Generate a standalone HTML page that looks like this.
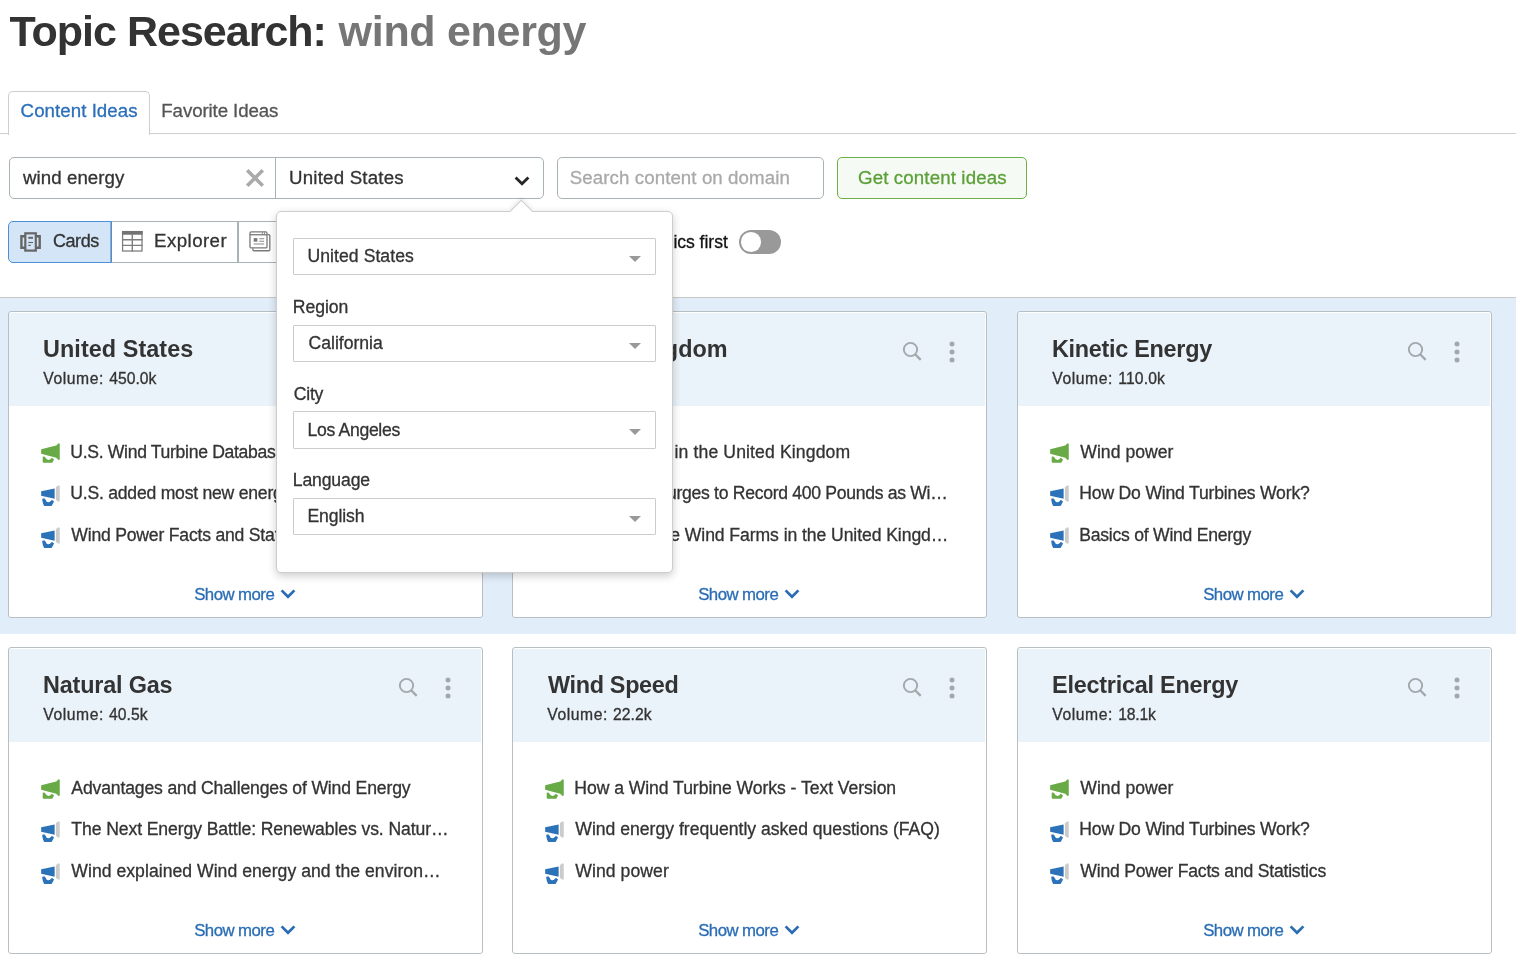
<!DOCTYPE html>
<html lang="en">
<head>
<meta charset="utf-8">
<title>Topic Research: wind energy</title>
<style>
*{box-sizing:border-box}
html,body{margin:0;padding:0;background:#fff}
body{font-family:"Liberation Sans",sans-serif;color:#333;width:1516px;height:976px;overflow:hidden;position:relative}
.page{position:absolute;left:0;top:0;width:1516px;height:976px;will-change:transform}
.t{position:absolute;display:block;margin:0;padding:0;line-height:1;white-space:nowrap;font-weight:400;-webkit-text-stroke:0.3px}
svg{display:block;position:absolute;overflow:visible}
.ic{position:absolute;display:block}
h1,h2{margin:0;font-weight:700}
.tt,.ctitle{-webkit-text-stroke:0}
.ptitle .t{font-weight:700;color:#333}
.ptitle .tkw{color:#767676}
.tabs{position:absolute;left:0;top:91px;width:1516px;height:43px;border-bottom:1px solid #cfcfcf}
.tab{position:absolute;top:0;height:43px;display:block}
.tab.on{left:8px;width:142px;border:1px solid #cfcfcf;border-bottom:0;border-radius:5px 5px 0 0;background:#fff;height:44px}
.tab.on .t{color:#2b6fba}
.tab.off{left:150px;width:140px}
.tab.off .t{color:#555}
.srow{position:absolute;left:0;top:157px;width:1516px;height:42px;margin:0}
.grp{position:absolute;left:9px;top:0;width:535px;height:42px;border:1px solid #a8b3b6;border-radius:5px;background:#fff}
.kw{position:absolute;left:0;top:0;width:266px;height:40px;border-right:1px solid #a8b3b6}
.ctry{position:absolute;left:266px;top:0;width:267px;height:40px}
.xic{left:234.5px;top:9.9px}
.cvd{left:238.3px;top:18px}
.dom{position:absolute;left:557px;top:0;width:267px;height:42px;border:1px solid #a8b3b6;border-radius:5px;background:#fff}
.inp{color:#333}
.inp.ph{color:#a9a9a9}
.go{position:absolute;left:837px;top:0;width:190px;height:42px;border:1px solid #6db04a;border-radius:5px;background:#f6faf4;padding:0;margin:0;font:inherit}
.gob{color:#5ca038}
.vrow{position:absolute;left:0;top:221px;width:1516px;height:42px}
.vbtns{position:absolute;left:8px;top:0;height:42px;width:600px}
.vb{position:absolute;top:0;height:42px;display:block;border:1px solid #a8b3b6;background:#fff}
.vb.on{background:#d3e5f6;border-color:#4a90d9;border-radius:5px 0 0 5px;z-index:2;box-shadow:inset -1px 0 0 #93a9bf}
.vbt{color:#333}
.trend .t{color:#111}
.tog{position:absolute;left:739px;top:8.8px;width:42px;height:24.4px;border-radius:13px;background:#999;display:block}
.tog b{position:absolute;left:2px;top:2.4px;width:19.6px;height:19.6px;border-radius:50%;background:#fff;display:block}
.band{position:absolute;left:0;top:297px;width:1516px;height:337px;background:#e1edf9;border-top:1px solid #c8c8c8}
.card{position:absolute;width:475px;height:307px;border:1px solid #b7bfc2;border-radius:3px;background:#fff;margin:0}
.chead{position:absolute;left:0;top:1px;width:472px;height:93px;background:#eaf2fa;display:block}
.ctitle{font-weight:700;color:#333}
.cvol{color:#333}
.clist{list-style:none;margin:0;padding:0}
.clist li{display:block}
.citem{color:#333}
.cmore{color:#2a6db5}
.mg{left:0;top:0}
.popup{position:absolute;width:397px;height:362px;background:#fff;border:1px solid #cdcdcd;border-radius:5px;box-shadow:0 3px 9px rgba(0,0,0,.2);z-index:10}
.parrow{position:absolute;left:236px;top:-9px;width:16.6px;height:16.6px;background:#fff;border-left:1px solid #cdcdcd;border-top:1px solid #cdcdcd;transform:rotate(45deg);display:block;box-shadow:-2px -2px 4px rgba(0,0,0,.07)}
.psel{position:absolute;left:16px;width:363px;height:37px;border:1px solid #ccc;border-radius:1px;background:#fff}
.pval{color:#333}
.plabel{color:#333}
.caret{position:absolute;right:14.1px;top:17px;width:0;height:0;border-left:6.5px solid transparent;border-right:6.5px solid transparent;border-top:6.3px solid #999;display:block}
</style>
</head>
<body>
<div class="page">

<h1 class="ptitle"><span class="t tt" style="left:9.50px;top:10.00px;font-size:43px;letter-spacing:-0.996px;">Topic Research:</span><span class="t tt tkw" style="left:338.60px;top:10.00px;font-size:43px;letter-spacing:-0.297px;">wind energy</span></h1>
<nav class="tabs">
<a class="tab on"><span class="t tabt" style="left:11.60px;top:10.00px;font-size:18.7px;letter-spacing:0.049px;">Content Ideas</span></a>
<a class="tab off"><span class="t tabt" style="left:11.30px;top:11.00px;font-size:18.7px;letter-spacing:-0.105px;">Favorite Ideas</span></a>
</nav>
<form class="srow">
<div class="grp">
<div class="kw"><span class="t inp" style="left:12.90px;top:11.00px;font-size:18.7px;letter-spacing:0.078px;">wind energy</span><svg viewBox="0 0 20 20" width="20" height="20" class="xic"><path d="M2.2 2.2 L17.8 17.8 M17.8 2.2 L2.2 17.8" stroke="#aaa" stroke-width="3.6" fill="none"/></svg></div>
<div class="ctry"><span class="t inp" style="left:13.00px;top:11.00px;font-size:18.7px;letter-spacing:0.205px;">United States</span><svg viewBox="0 0 16 10" width="16" height="10" class="cvd"><path d="M1.6 1.5 L8 7.7 L14.4 1.5" fill="none" stroke="#262626" stroke-width="2.8"/></svg></div>
</div>
<div class="dom"><span class="t inp ph" style="left:11.80px;top:11.00px;font-size:18.7px;letter-spacing:0.080px;">Search content on domain</span></div>
<button class="go" type="button"><span class="t gob" style="left:20.00px;top:11.00px;font-size:18.7px;letter-spacing:0.129px;">Get content ideas</span></button>
</form>
<div class="vrow">
<div class="vbtns">
<a class="vb on" style="left:0;width:104px"><svg viewBox="0 0 24 22" width="24" height="22" class="vic" style="left:10px;top:9px"><g fill="none" stroke="#666" stroke-width="2.2"><rect x="6.3" y="2.3" width="10.5" height="17.3"/><path d="M6.2 5.2 H2.4 V16.7 H6.2 M16.9 5.2 H20.7 V16.7 H16.9" stroke-width="2.4"/></g><g stroke="#666" fill="none"><path d="M9.3 6.8 H14" stroke-width="2"/><path d="M9.3 11.5 H14" stroke-width="1.2"/><path d="M9.3 14.4 H11.8" stroke-width="1.2"/></g></svg><span class="t vbt" style="left:43.90px;top:10.00px;font-size:18px;letter-spacing:-0.404px;">Cards</span></a>
<a class="vb" style="left:103px;width:127px"><svg viewBox="0 0 21 21" width="20.6" height="20.6" class="vic" style="left:10.2px;top:9.1px"><rect x="0.6" y="0.6" width="19.8" height="19.8" fill="none" stroke="#7d7d7d" stroke-width="1.3"/><rect x="0" y="0" width="21" height="3.8" fill="#737373"/><path d="M0 8.9 H21 M0 14.6 H21 M10.5 3 V21" stroke="#7d7d7d" stroke-width="1.4" fill="none"/></svg><span class="t vbt" style="left:42.10px;top:10.00px;font-size:18.7px;letter-spacing:0.420px;">Explorer</span></a>
<a class="vb" style="left:230px;width:128px"><svg viewBox="0 0 23 22" width="23" height="22" class="vic" style="left:10.1px;top:9.1px;width:21.8px;height:20.6px"><g fill="none" stroke="#7a7a7a" stroke-width="1.4"><path d="M4 18.4 V19.9 Q4 21.1 5.2 21.1 H20.9 Q22.1 21.1 22.1 19.9 V5 Q22.1 3.8 20.9 3.8 H19.6"/><rect x="0.9" y="0.9" width="18.2" height="17.2" rx="1.4"/><path d="M0.9 4 H19.1" /></g><rect x="4.9" y="7.6" width="3.9" height="3.8" fill="#777"/><path d="M10.8 8.2 H16 M10.8 11 H16 M4.9 13.8 H16" stroke="#888" stroke-width="1.1"/><path d="M14.2 1.4 V3.4 M16.4 1.4 V3.4" stroke="#7a7a7a" stroke-width="0.9"/></svg><span class="t vbt" style="left:43.00px;top:10.00px;font-size:18.7px;letter-spacing:-0.060px;">Overview</span></a>
</div>
<label class="trend"><span class="t trt" style="left:547.55px;top:13.00px;font-size:17.6px;letter-spacing:-0.043px;">Trending subtopics first</span><i class="tog"><b></b></i></label>
</div>

<div class="band"></div>
<section class="card" style="left:8px;top:311px">
<header class="chead">
<h2 class="t ctitle" style="left:34.00px;top:25.00px;font-size:23.4px;letter-spacing:0.070px;">United States</h2>
<span class="t cvol" style="left:34.30px;top:58.00px;font-size:15.7px;letter-spacing:0.563px;">Volume:</span>
<span class="t cvol" style="left:100.20px;top:58.00px;font-size:15.7px;letter-spacing:0.029px;">450.0k</span>
<span class="ic" style="left:388.6px;top:28px"><svg class="sr" viewBox="0 0 22 22" width="22" height="22"><circle cx="8.5" cy="8.5" r="6.65" fill="none" stroke="#a3a9ab" stroke-width="1.9"/><path d="M13.1 13.2 L18.7 18.9" stroke="#a3a9ab" stroke-width="2.3" fill="none"/></svg></span>
<span class="ic" style="left:436.3px;top:27.6px"><svg class="dt" viewBox="0 0 6 22" width="6" height="22"><circle cx="3" cy="3" r="2.5" fill="#a3a9ab"/><circle cx="3" cy="11" r="2.5" fill="#a3a9ab"/><circle cx="3" cy="19" r="2.5" fill="#a3a9ab"/></svg></span>
</header>
<ul class="clist">
<li>
<span class="ic" style="left:32px;top:131px"><svg class="mg" viewBox="0 0 20 22" width="20" height="22"><path fill="#68aa46" d="M0.15 6.2 L15.2 2.4 L17.3 0.5 Q17.8 0.1 18.3 0.6 L18.75 1.15 L18.75 16.2 L18.3 16.7 Q17.8 17.2 17.3 16.7 L15.2 14.7 L0.15 10.8 Z"/><path fill="#68aa46" d="M1.7 14.3 Q1.7 13.5 2.5 13.6 L3.5 13.7 Q4.1 13.8 4.4 14.6 Q5.4 17 7.4 17 Q9.2 17 10.2 15.3 Q10.5 14.8 11 15 L12.6 15.9 Q13.1 16.2 12.9 16.7 L11.6 19.2 Q11.3 19.75 10.7 19.75 L2.8 19.75 Q1.7 19.75 1.7 18.7 Z"/></svg></span>
<span class="t citem" style="left:61.30px;top:132.00px;font-size:17.6px;letter-spacing:-0.321px;">U.S. Wind Turbine Database</span>
</li>
<li>
<span class="ic" style="left:32px;top:173px"><svg class="mg" viewBox="0 0 20 22" width="20" height="22"><path fill="#2c72b8" d="M0.15 6.2 L13.65 3.45 L13.65 13.8 L0.15 10.8 Z"/><path fill="#2c72b8" d="M1.2 14.4 Q1.1 13.4 2.1 13.4 L3.3 13.5 Q4.1 13.6 4.4 14.5 Q5.4 17.2 7.4 17.2 Q9.2 17.2 10.2 15.4 Q10.5 14.9 11 15.1 L12.6 16 Q13.1 16.3 12.8 16.9 L10.9 20.5 Q10.6 21 10 21 L3.9 21 Q3.2 21 2.9 20.4 Q1.5 17.6 1.2 14.4 Z"/><path fill="#cbcbcb" d="M14.9 2.3 L17.1 0.5 Q17.6 0.1 18.1 0.6 L18.75 1.3 L18.75 15.9 L18.1 16.5 Q17.6 17 17.1 16.6 L14.9 14.7 Z"/></svg></span>
<span class="t citem" style="left:61.30px;top:173.00px;font-size:17.6px;letter-spacing:-0.233px;">U.S. added most new energy capacity from win…</span>
</li>
<li>
<span class="ic" style="left:32px;top:215px"><svg class="mg" viewBox="0 0 20 22" width="20" height="22"><path fill="#2c72b8" d="M0.15 6.2 L13.65 3.45 L13.65 13.8 L0.15 10.8 Z"/><path fill="#2c72b8" d="M1.2 14.4 Q1.1 13.4 2.1 13.4 L3.3 13.5 Q4.1 13.6 4.4 14.5 Q5.4 17.2 7.4 17.2 Q9.2 17.2 10.2 15.4 Q10.5 14.9 11 15.1 L12.6 16 Q13.1 16.3 12.8 16.9 L10.9 20.5 Q10.6 21 10 21 L3.9 21 Q3.2 21 2.9 20.4 Q1.5 17.6 1.2 14.4 Z"/><path fill="#cbcbcb" d="M14.9 2.3 L17.1 0.5 Q17.6 0.1 18.1 0.6 L18.75 1.3 L18.75 15.9 L18.1 16.5 Q17.6 17 17.1 16.6 L14.9 14.7 Z"/></svg></span>
<span class="t citem" style="left:62.30px;top:215.00px;font-size:17.6px;letter-spacing:-0.206px;">Wind Power Facts and Statistics</span>
</li>
</ul>
<a class="more">
<span class="t cmore" style="left:185.20px;top:275.00px;font-size:16.8px;letter-spacing:-0.543px;">Show more</span>
<span class="ic" style="left:271.2px;top:277.2px"><svg class="cv" viewBox="0 0 16 10" width="16" height="10"><path d="M1.6 1.4 L8 7.8 L14.4 1.4" fill="none" stroke="#2a6db5" stroke-width="2.7"/></svg></span>
</a>
</section>
<section class="card" style="left:512px;top:311px">
<header class="chead">
<h2 class="t ctitle" style="left:34.00px;top:25.00px;font-size:23.4px;letter-spacing:-0.008px;">United Kingdom</h2>
<span class="t cvol" style="left:34.30px;top:58.00px;font-size:15.7px;letter-spacing:0.563px;">Volume:</span>
<span class="t cvol" style="left:100.20px;top:58.00px;font-size:15.7px;letter-spacing:-0.091px;">135.0k</span>
<span class="ic" style="left:388.6px;top:28px"><svg class="sr" viewBox="0 0 22 22" width="22" height="22"><circle cx="8.5" cy="8.5" r="6.65" fill="none" stroke="#a3a9ab" stroke-width="1.9"/><path d="M13.1 13.2 L18.7 18.9" stroke="#a3a9ab" stroke-width="2.3" fill="none"/></svg></span>
<span class="ic" style="left:436.3px;top:27.6px"><svg class="dt" viewBox="0 0 6 22" width="6" height="22"><circle cx="3" cy="3" r="2.5" fill="#a3a9ab"/><circle cx="3" cy="11" r="2.5" fill="#a3a9ab"/><circle cx="3" cy="19" r="2.5" fill="#a3a9ab"/></svg></span>
</header>
<ul class="clist">
<li>
<span class="ic" style="left:32px;top:131px"><svg class="mg" viewBox="0 0 20 22" width="20" height="22"><path fill="#68aa46" d="M0.15 6.2 L15.2 2.4 L17.3 0.5 Q17.8 0.1 18.3 0.6 L18.75 1.15 L18.75 16.2 L18.3 16.7 Q17.8 17.2 17.3 16.7 L15.2 14.7 L0.15 10.8 Z"/><path fill="#68aa46" d="M1.7 14.3 Q1.7 13.5 2.5 13.6 L3.5 13.7 Q4.1 13.8 4.4 14.6 Q5.4 17 7.4 17 Q9.2 17 10.2 15.3 Q10.5 14.8 11 15 L12.6 15.9 Q13.1 16.2 12.9 16.7 L11.6 19.2 Q11.3 19.75 10.7 19.75 L2.8 19.75 Q1.7 19.75 1.7 18.7 Z"/></svg></span>
<span class="t citem" style="left:62.32px;top:132.00px;font-size:17.6px;letter-spacing:0.127px;">Wind power in the United Kingdom</span>
</li>
<li>
<span class="ic" style="left:32px;top:173px"><svg class="mg" viewBox="0 0 20 22" width="20" height="22"><path fill="#2c72b8" d="M0.15 6.2 L13.65 3.45 L13.65 13.8 L0.15 10.8 Z"/><path fill="#2c72b8" d="M1.2 14.4 Q1.1 13.4 2.1 13.4 L3.3 13.5 Q4.1 13.6 4.4 14.5 Q5.4 17.2 7.4 17.2 Q9.2 17.2 10.2 15.4 Q10.5 14.9 11 15.1 L12.6 16 Q13.1 16.3 12.8 16.9 L10.9 20.5 Q10.6 21 10 21 L3.9 21 Q3.2 21 2.9 20.4 Q1.5 17.6 1.2 14.4 Z"/><path fill="#cbcbcb" d="M14.9 2.3 L17.1 0.5 Q17.6 0.1 18.1 0.6 L18.75 1.3 L18.75 15.9 L18.1 16.5 Q17.6 17 17.1 16.6 L14.9 14.7 Z"/></svg></span>
<span class="t citem" style="left:52.05px;top:173.00px;font-size:17.6px;letter-spacing:-0.302px;">U.K. Power Surges to Record 400 Pounds as Wi…</span>
</li>
<li>
<span class="ic" style="left:32px;top:215px"><svg class="mg" viewBox="0 0 20 22" width="20" height="22"><path fill="#2c72b8" d="M0.15 6.2 L13.65 3.45 L13.65 13.8 L0.15 10.8 Z"/><path fill="#2c72b8" d="M1.2 14.4 Q1.1 13.4 2.1 13.4 L3.3 13.5 Q4.1 13.6 4.4 14.5 Q5.4 17.2 7.4 17.2 Q9.2 17.2 10.2 15.4 Q10.5 14.9 11 15.1 L12.6 16 Q13.1 16.3 12.8 16.9 L10.9 20.5 Q10.6 21 10 21 L3.9 21 Q3.2 21 2.9 20.4 Q1.5 17.6 1.2 14.4 Z"/><path fill="#cbcbcb" d="M14.9 2.3 L17.1 0.5 Q17.6 0.1 18.1 0.6 L18.75 1.3 L18.75 15.9 L18.1 16.5 Q17.6 17 17.1 16.6 L14.9 14.7 Z"/></svg></span>
<span class="t citem" style="left:49.28px;top:215.00px;font-size:17.6px;letter-spacing:-0.079px;">List of Offshore Wind Farms in the United Kingd…</span>
</li>
</ul>
<a class="more">
<span class="t cmore" style="left:185.20px;top:275.00px;font-size:16.8px;letter-spacing:-0.543px;">Show more</span>
<span class="ic" style="left:271.2px;top:277.2px"><svg class="cv" viewBox="0 0 16 10" width="16" height="10"><path d="M1.6 1.4 L8 7.8 L14.4 1.4" fill="none" stroke="#2a6db5" stroke-width="2.7"/></svg></span>
</a>
</section>
<section class="card" style="left:1017px;top:311px">
<header class="chead">
<h2 class="t ctitle" style="left:34.00px;top:25.00px;font-size:23.4px;letter-spacing:-0.275px;">Kinetic Energy</h2>
<span class="t cvol" style="left:34.30px;top:58.00px;font-size:15.7px;letter-spacing:0.563px;">Volume:</span>
<span class="t cvol" style="left:100.20px;top:58.00px;font-size:15.7px;letter-spacing:0.162px;">110.0k</span>
<span class="ic" style="left:388.6px;top:28px"><svg class="sr" viewBox="0 0 22 22" width="22" height="22"><circle cx="8.5" cy="8.5" r="6.65" fill="none" stroke="#a3a9ab" stroke-width="1.9"/><path d="M13.1 13.2 L18.7 18.9" stroke="#a3a9ab" stroke-width="2.3" fill="none"/></svg></span>
<span class="ic" style="left:436.3px;top:27.6px"><svg class="dt" viewBox="0 0 6 22" width="6" height="22"><circle cx="3" cy="3" r="2.5" fill="#a3a9ab"/><circle cx="3" cy="11" r="2.5" fill="#a3a9ab"/><circle cx="3" cy="19" r="2.5" fill="#a3a9ab"/></svg></span>
</header>
<ul class="clist">
<li>
<span class="ic" style="left:32px;top:131px"><svg class="mg" viewBox="0 0 20 22" width="20" height="22"><path fill="#68aa46" d="M0.15 6.2 L15.2 2.4 L17.3 0.5 Q17.8 0.1 18.3 0.6 L18.75 1.15 L18.75 16.2 L18.3 16.7 Q17.8 17.2 17.3 16.7 L15.2 14.7 L0.15 10.8 Z"/><path fill="#68aa46" d="M1.7 14.3 Q1.7 13.5 2.5 13.6 L3.5 13.7 Q4.1 13.8 4.4 14.6 Q5.4 17 7.4 17 Q9.2 17 10.2 15.3 Q10.5 14.8 11 15 L12.6 15.9 Q13.1 16.2 12.9 16.7 L11.6 19.2 Q11.3 19.75 10.7 19.75 L2.8 19.75 Q1.7 19.75 1.7 18.7 Z"/></svg></span>
<span class="t citem" style="left:62.30px;top:132.00px;font-size:17.6px;letter-spacing:0.030px;">Wind power</span>
</li>
<li>
<span class="ic" style="left:32px;top:173px"><svg class="mg" viewBox="0 0 20 22" width="20" height="22"><path fill="#2c72b8" d="M0.15 6.2 L13.65 3.45 L13.65 13.8 L0.15 10.8 Z"/><path fill="#2c72b8" d="M1.2 14.4 Q1.1 13.4 2.1 13.4 L3.3 13.5 Q4.1 13.6 4.4 14.5 Q5.4 17.2 7.4 17.2 Q9.2 17.2 10.2 15.4 Q10.5 14.9 11 15.1 L12.6 16 Q13.1 16.3 12.8 16.9 L10.9 20.5 Q10.6 21 10 21 L3.9 21 Q3.2 21 2.9 20.4 Q1.5 17.6 1.2 14.4 Z"/><path fill="#cbcbcb" d="M14.9 2.3 L17.1 0.5 Q17.6 0.1 18.1 0.6 L18.75 1.3 L18.75 15.9 L18.1 16.5 Q17.6 17 17.1 16.6 L14.9 14.7 Z"/></svg></span>
<span class="t citem" style="left:61.30px;top:173.00px;font-size:17.6px;letter-spacing:-0.194px;">How Do Wind Turbines Work?</span>
</li>
<li>
<span class="ic" style="left:32px;top:215px"><svg class="mg" viewBox="0 0 20 22" width="20" height="22"><path fill="#2c72b8" d="M0.15 6.2 L13.65 3.45 L13.65 13.8 L0.15 10.8 Z"/><path fill="#2c72b8" d="M1.2 14.4 Q1.1 13.4 2.1 13.4 L3.3 13.5 Q4.1 13.6 4.4 14.5 Q5.4 17.2 7.4 17.2 Q9.2 17.2 10.2 15.4 Q10.5 14.9 11 15.1 L12.6 16 Q13.1 16.3 12.8 16.9 L10.9 20.5 Q10.6 21 10 21 L3.9 21 Q3.2 21 2.9 20.4 Q1.5 17.6 1.2 14.4 Z"/><path fill="#cbcbcb" d="M14.9 2.3 L17.1 0.5 Q17.6 0.1 18.1 0.6 L18.75 1.3 L18.75 15.9 L18.1 16.5 Q17.6 17 17.1 16.6 L14.9 14.7 Z"/></svg></span>
<span class="t citem" style="left:61.30px;top:215.00px;font-size:17.6px;letter-spacing:-0.254px;">Basics of Wind Energy</span>
</li>
</ul>
<a class="more">
<span class="t cmore" style="left:185.20px;top:275.00px;font-size:16.8px;letter-spacing:-0.543px;">Show more</span>
<span class="ic" style="left:271.2px;top:277.2px"><svg class="cv" viewBox="0 0 16 10" width="16" height="10"><path d="M1.6 1.4 L8 7.8 L14.4 1.4" fill="none" stroke="#2a6db5" stroke-width="2.7"/></svg></span>
</a>
</section>
<section class="card" style="left:8px;top:647px">
<header class="chead">
<h2 class="t ctitle" style="left:34.00px;top:25.00px;font-size:23.4px;letter-spacing:-0.179px;">Natural Gas</h2>
<span class="t cvol" style="left:34.30px;top:58.00px;font-size:15.7px;letter-spacing:0.563px;">Volume:</span>
<span class="t cvol" style="left:100.00px;top:58.00px;font-size:15.7px;letter-spacing:0.067px;">40.5k</span>
<span class="ic" style="left:388.6px;top:28px"><svg class="sr" viewBox="0 0 22 22" width="22" height="22"><circle cx="8.5" cy="8.5" r="6.65" fill="none" stroke="#a3a9ab" stroke-width="1.9"/><path d="M13.1 13.2 L18.7 18.9" stroke="#a3a9ab" stroke-width="2.3" fill="none"/></svg></span>
<span class="ic" style="left:436.3px;top:27.6px"><svg class="dt" viewBox="0 0 6 22" width="6" height="22"><circle cx="3" cy="3" r="2.5" fill="#a3a9ab"/><circle cx="3" cy="11" r="2.5" fill="#a3a9ab"/><circle cx="3" cy="19" r="2.5" fill="#a3a9ab"/></svg></span>
</header>
<ul class="clist">
<li>
<span class="ic" style="left:32px;top:131px"><svg class="mg" viewBox="0 0 20 22" width="20" height="22"><path fill="#68aa46" d="M0.15 6.2 L15.2 2.4 L17.3 0.5 Q17.8 0.1 18.3 0.6 L18.75 1.15 L18.75 16.2 L18.3 16.7 Q17.8 17.2 17.3 16.7 L15.2 14.7 L0.15 10.8 Z"/><path fill="#68aa46" d="M1.7 14.3 Q1.7 13.5 2.5 13.6 L3.5 13.7 Q4.1 13.8 4.4 14.6 Q5.4 17 7.4 17 Q9.2 17 10.2 15.3 Q10.5 14.8 11 15 L12.6 15.9 Q13.1 16.2 12.9 16.7 L11.6 19.2 Q11.3 19.75 10.7 19.75 L2.8 19.75 Q1.7 19.75 1.7 18.7 Z"/></svg></span>
<span class="t citem" style="left:62.30px;top:132.00px;font-size:17.6px;letter-spacing:-0.153px;">Advantages and Challenges of Wind Energy</span>
</li>
<li>
<span class="ic" style="left:32px;top:173px"><svg class="mg" viewBox="0 0 20 22" width="20" height="22"><path fill="#2c72b8" d="M0.15 6.2 L13.65 3.45 L13.65 13.8 L0.15 10.8 Z"/><path fill="#2c72b8" d="M1.2 14.4 Q1.1 13.4 2.1 13.4 L3.3 13.5 Q4.1 13.6 4.4 14.5 Q5.4 17.2 7.4 17.2 Q9.2 17.2 10.2 15.4 Q10.5 14.9 11 15.1 L12.6 16 Q13.1 16.3 12.8 16.9 L10.9 20.5 Q10.6 21 10 21 L3.9 21 Q3.2 21 2.9 20.4 Q1.5 17.6 1.2 14.4 Z"/><path fill="#cbcbcb" d="M14.9 2.3 L17.1 0.5 Q17.6 0.1 18.1 0.6 L18.75 1.3 L18.75 15.9 L18.1 16.5 Q17.6 17 17.1 16.6 L14.9 14.7 Z"/></svg></span>
<span class="t citem" style="left:62.30px;top:173.00px;font-size:17.6px;letter-spacing:-0.093px;">The Next Energy Battle: Renewables vs. Natur…</span>
</li>
<li>
<span class="ic" style="left:32px;top:215px"><svg class="mg" viewBox="0 0 20 22" width="20" height="22"><path fill="#2c72b8" d="M0.15 6.2 L13.65 3.45 L13.65 13.8 L0.15 10.8 Z"/><path fill="#2c72b8" d="M1.2 14.4 Q1.1 13.4 2.1 13.4 L3.3 13.5 Q4.1 13.6 4.4 14.5 Q5.4 17.2 7.4 17.2 Q9.2 17.2 10.2 15.4 Q10.5 14.9 11 15.1 L12.6 16 Q13.1 16.3 12.8 16.9 L10.9 20.5 Q10.6 21 10 21 L3.9 21 Q3.2 21 2.9 20.4 Q1.5 17.6 1.2 14.4 Z"/><path fill="#cbcbcb" d="M14.9 2.3 L17.1 0.5 Q17.6 0.1 18.1 0.6 L18.75 1.3 L18.75 15.9 L18.1 16.5 Q17.6 17 17.1 16.6 L14.9 14.7 Z"/></svg></span>
<span class="t citem" style="left:62.30px;top:215.00px;font-size:17.6px;letter-spacing:0.037px;">Wind explained Wind energy and the environ…</span>
</li>
</ul>
<a class="more">
<span class="t cmore" style="left:185.20px;top:275.00px;font-size:16.8px;letter-spacing:-0.543px;">Show more</span>
<span class="ic" style="left:271.2px;top:277.2px"><svg class="cv" viewBox="0 0 16 10" width="16" height="10"><path d="M1.6 1.4 L8 7.8 L14.4 1.4" fill="none" stroke="#2a6db5" stroke-width="2.7"/></svg></span>
</a>
</section>
<section class="card" style="left:512px;top:647px">
<header class="chead">
<h2 class="t ctitle" style="left:35.00px;top:25.00px;font-size:23.4px;letter-spacing:-0.317px;">Wind Speed</h2>
<span class="t cvol" style="left:34.30px;top:58.00px;font-size:15.7px;letter-spacing:0.563px;">Volume:</span>
<span class="t cvol" style="left:100.10px;top:58.00px;font-size:15.7px;letter-spacing:0.017px;">22.2k</span>
<span class="ic" style="left:388.6px;top:28px"><svg class="sr" viewBox="0 0 22 22" width="22" height="22"><circle cx="8.5" cy="8.5" r="6.65" fill="none" stroke="#a3a9ab" stroke-width="1.9"/><path d="M13.1 13.2 L18.7 18.9" stroke="#a3a9ab" stroke-width="2.3" fill="none"/></svg></span>
<span class="ic" style="left:436.3px;top:27.6px"><svg class="dt" viewBox="0 0 6 22" width="6" height="22"><circle cx="3" cy="3" r="2.5" fill="#a3a9ab"/><circle cx="3" cy="11" r="2.5" fill="#a3a9ab"/><circle cx="3" cy="19" r="2.5" fill="#a3a9ab"/></svg></span>
</header>
<ul class="clist">
<li>
<span class="ic" style="left:32px;top:131px"><svg class="mg" viewBox="0 0 20 22" width="20" height="22"><path fill="#68aa46" d="M0.15 6.2 L15.2 2.4 L17.3 0.5 Q17.8 0.1 18.3 0.6 L18.75 1.15 L18.75 16.2 L18.3 16.7 Q17.8 17.2 17.3 16.7 L15.2 14.7 L0.15 10.8 Z"/><path fill="#68aa46" d="M1.7 14.3 Q1.7 13.5 2.5 13.6 L3.5 13.7 Q4.1 13.8 4.4 14.6 Q5.4 17 7.4 17 Q9.2 17 10.2 15.3 Q10.5 14.8 11 15 L12.6 15.9 Q13.1 16.2 12.9 16.7 L11.6 19.2 Q11.3 19.75 10.7 19.75 L2.8 19.75 Q1.7 19.75 1.7 18.7 Z"/></svg></span>
<span class="t citem" style="left:61.30px;top:132.00px;font-size:17.6px;letter-spacing:-0.056px;">How a Wind Turbine Works - Text Version</span>
</li>
<li>
<span class="ic" style="left:32px;top:173px"><svg class="mg" viewBox="0 0 20 22" width="20" height="22"><path fill="#2c72b8" d="M0.15 6.2 L13.65 3.45 L13.65 13.8 L0.15 10.8 Z"/><path fill="#2c72b8" d="M1.2 14.4 Q1.1 13.4 2.1 13.4 L3.3 13.5 Q4.1 13.6 4.4 14.5 Q5.4 17.2 7.4 17.2 Q9.2 17.2 10.2 15.4 Q10.5 14.9 11 15.1 L12.6 16 Q13.1 16.3 12.8 16.9 L10.9 20.5 Q10.6 21 10 21 L3.9 21 Q3.2 21 2.9 20.4 Q1.5 17.6 1.2 14.4 Z"/><path fill="#cbcbcb" d="M14.9 2.3 L17.1 0.5 Q17.6 0.1 18.1 0.6 L18.75 1.3 L18.75 15.9 L18.1 16.5 Q17.6 17 17.1 16.6 L14.9 14.7 Z"/></svg></span>
<span class="t citem" style="left:62.30px;top:173.00px;font-size:17.6px;letter-spacing:-0.005px;">Wind energy frequently asked questions (FAQ)</span>
</li>
<li>
<span class="ic" style="left:32px;top:215px"><svg class="mg" viewBox="0 0 20 22" width="20" height="22"><path fill="#2c72b8" d="M0.15 6.2 L13.65 3.45 L13.65 13.8 L0.15 10.8 Z"/><path fill="#2c72b8" d="M1.2 14.4 Q1.1 13.4 2.1 13.4 L3.3 13.5 Q4.1 13.6 4.4 14.5 Q5.4 17.2 7.4 17.2 Q9.2 17.2 10.2 15.4 Q10.5 14.9 11 15.1 L12.6 16 Q13.1 16.3 12.8 16.9 L10.9 20.5 Q10.6 21 10 21 L3.9 21 Q3.2 21 2.9 20.4 Q1.5 17.6 1.2 14.4 Z"/><path fill="#cbcbcb" d="M14.9 2.3 L17.1 0.5 Q17.6 0.1 18.1 0.6 L18.75 1.3 L18.75 15.9 L18.1 16.5 Q17.6 17 17.1 16.6 L14.9 14.7 Z"/></svg></span>
<span class="t citem" style="left:62.30px;top:215.00px;font-size:17.6px;letter-spacing:0.063px;">Wind power</span>
</li>
</ul>
<a class="more">
<span class="t cmore" style="left:185.20px;top:275.00px;font-size:16.8px;letter-spacing:-0.543px;">Show more</span>
<span class="ic" style="left:271.2px;top:277.2px"><svg class="cv" viewBox="0 0 16 10" width="16" height="10"><path d="M1.6 1.4 L8 7.8 L14.4 1.4" fill="none" stroke="#2a6db5" stroke-width="2.7"/></svg></span>
</a>
</section>
<section class="card" style="left:1017px;top:647px">
<header class="chead">
<h2 class="t ctitle" style="left:34.00px;top:25.00px;font-size:23.4px;letter-spacing:-0.226px;">Electrical Energy</h2>
<span class="t cvol" style="left:34.30px;top:58.00px;font-size:15.7px;letter-spacing:0.563px;">Volume:</span>
<span class="t cvol" style="left:100.20px;top:58.00px;font-size:15.7px;letter-spacing:-0.183px;">18.1k</span>
<span class="ic" style="left:388.6px;top:28px"><svg class="sr" viewBox="0 0 22 22" width="22" height="22"><circle cx="8.5" cy="8.5" r="6.65" fill="none" stroke="#a3a9ab" stroke-width="1.9"/><path d="M13.1 13.2 L18.7 18.9" stroke="#a3a9ab" stroke-width="2.3" fill="none"/></svg></span>
<span class="ic" style="left:436.3px;top:27.6px"><svg class="dt" viewBox="0 0 6 22" width="6" height="22"><circle cx="3" cy="3" r="2.5" fill="#a3a9ab"/><circle cx="3" cy="11" r="2.5" fill="#a3a9ab"/><circle cx="3" cy="19" r="2.5" fill="#a3a9ab"/></svg></span>
</header>
<ul class="clist">
<li>
<span class="ic" style="left:32px;top:131px"><svg class="mg" viewBox="0 0 20 22" width="20" height="22"><path fill="#68aa46" d="M0.15 6.2 L15.2 2.4 L17.3 0.5 Q17.8 0.1 18.3 0.6 L18.75 1.15 L18.75 16.2 L18.3 16.7 Q17.8 17.2 17.3 16.7 L15.2 14.7 L0.15 10.8 Z"/><path fill="#68aa46" d="M1.7 14.3 Q1.7 13.5 2.5 13.6 L3.5 13.7 Q4.1 13.8 4.4 14.6 Q5.4 17 7.4 17 Q9.2 17 10.2 15.3 Q10.5 14.8 11 15 L12.6 15.9 Q13.1 16.2 12.9 16.7 L11.6 19.2 Q11.3 19.75 10.7 19.75 L2.8 19.75 Q1.7 19.75 1.7 18.7 Z"/></svg></span>
<span class="t citem" style="left:62.30px;top:132.00px;font-size:17.6px;letter-spacing:0.030px;">Wind power</span>
</li>
<li>
<span class="ic" style="left:32px;top:173px"><svg class="mg" viewBox="0 0 20 22" width="20" height="22"><path fill="#2c72b8" d="M0.15 6.2 L13.65 3.45 L13.65 13.8 L0.15 10.8 Z"/><path fill="#2c72b8" d="M1.2 14.4 Q1.1 13.4 2.1 13.4 L3.3 13.5 Q4.1 13.6 4.4 14.5 Q5.4 17.2 7.4 17.2 Q9.2 17.2 10.2 15.4 Q10.5 14.9 11 15.1 L12.6 16 Q13.1 16.3 12.8 16.9 L10.9 20.5 Q10.6 21 10 21 L3.9 21 Q3.2 21 2.9 20.4 Q1.5 17.6 1.2 14.4 Z"/><path fill="#cbcbcb" d="M14.9 2.3 L17.1 0.5 Q17.6 0.1 18.1 0.6 L18.75 1.3 L18.75 15.9 L18.1 16.5 Q17.6 17 17.1 16.6 L14.9 14.7 Z"/></svg></span>
<span class="t citem" style="left:61.30px;top:173.00px;font-size:17.6px;letter-spacing:-0.194px;">How Do Wind Turbines Work?</span>
</li>
<li>
<span class="ic" style="left:32px;top:215px"><svg class="mg" viewBox="0 0 20 22" width="20" height="22"><path fill="#2c72b8" d="M0.15 6.2 L13.65 3.45 L13.65 13.8 L0.15 10.8 Z"/><path fill="#2c72b8" d="M1.2 14.4 Q1.1 13.4 2.1 13.4 L3.3 13.5 Q4.1 13.6 4.4 14.5 Q5.4 17.2 7.4 17.2 Q9.2 17.2 10.2 15.4 Q10.5 14.9 11 15.1 L12.6 16 Q13.1 16.3 12.8 16.9 L10.9 20.5 Q10.6 21 10 21 L3.9 21 Q3.2 21 2.9 20.4 Q1.5 17.6 1.2 14.4 Z"/><path fill="#cbcbcb" d="M14.9 2.3 L17.1 0.5 Q17.6 0.1 18.1 0.6 L18.75 1.3 L18.75 15.9 L18.1 16.5 Q17.6 17 17.1 16.6 L14.9 14.7 Z"/></svg></span>
<span class="t citem" style="left:62.30px;top:215.00px;font-size:17.6px;letter-spacing:-0.212px;">Wind Power Facts and Statistics</span>
</li>
</ul>
<a class="more">
<span class="t cmore" style="left:185.20px;top:275.00px;font-size:16.8px;letter-spacing:-0.543px;">Show more</span>
<span class="ic" style="left:271.2px;top:277.2px"><svg class="cv" viewBox="0 0 16 10" width="16" height="10"><path d="M1.6 1.4 L8 7.8 L14.4 1.4" fill="none" stroke="#2a6db5" stroke-width="2.7"/></svg></span>
</a>
</section>
<div class="popup" style="left:276px;top:211px">
<i class="parrow"></i>
<div class="psel" style="top:26px;height:37px"><span class="t pval" style="left:13.50px;top:9.00px;font-size:17.6px;letter-spacing:0.056px;">United States</span><i class="caret"></i></div>
<label class="t plabel" style="left:15.80px;top:87.00px;font-size:17.6px;letter-spacing:-0.034px;">Region</label>
<div class="psel" style="top:113px;height:37px"><span class="t pval" style="left:14.50px;top:9.00px;font-size:17.6px;letter-spacing:-0.004px;">California</span><i class="caret"></i></div>
<label class="t plabel" style="left:16.80px;top:174.00px;font-size:17.6px;letter-spacing:-0.268px;">City</label>
<div class="psel" style="top:199px;height:38px"><span class="t pval" style="left:13.50px;top:10.00px;font-size:17.6px;letter-spacing:-0.314px;">Los Angeles</span><i class="caret"></i></div>
<label class="t plabel" style="left:15.80px;top:260.00px;font-size:17.6px;letter-spacing:-0.142px;">Language</label>
<div class="psel" style="top:286px;height:37px"><span class="t pval" style="left:13.50px;top:9.00px;font-size:17.6px;letter-spacing:-0.120px;">English</span><i class="caret"></i></div>
</div>

</div>
</body>
</html>
